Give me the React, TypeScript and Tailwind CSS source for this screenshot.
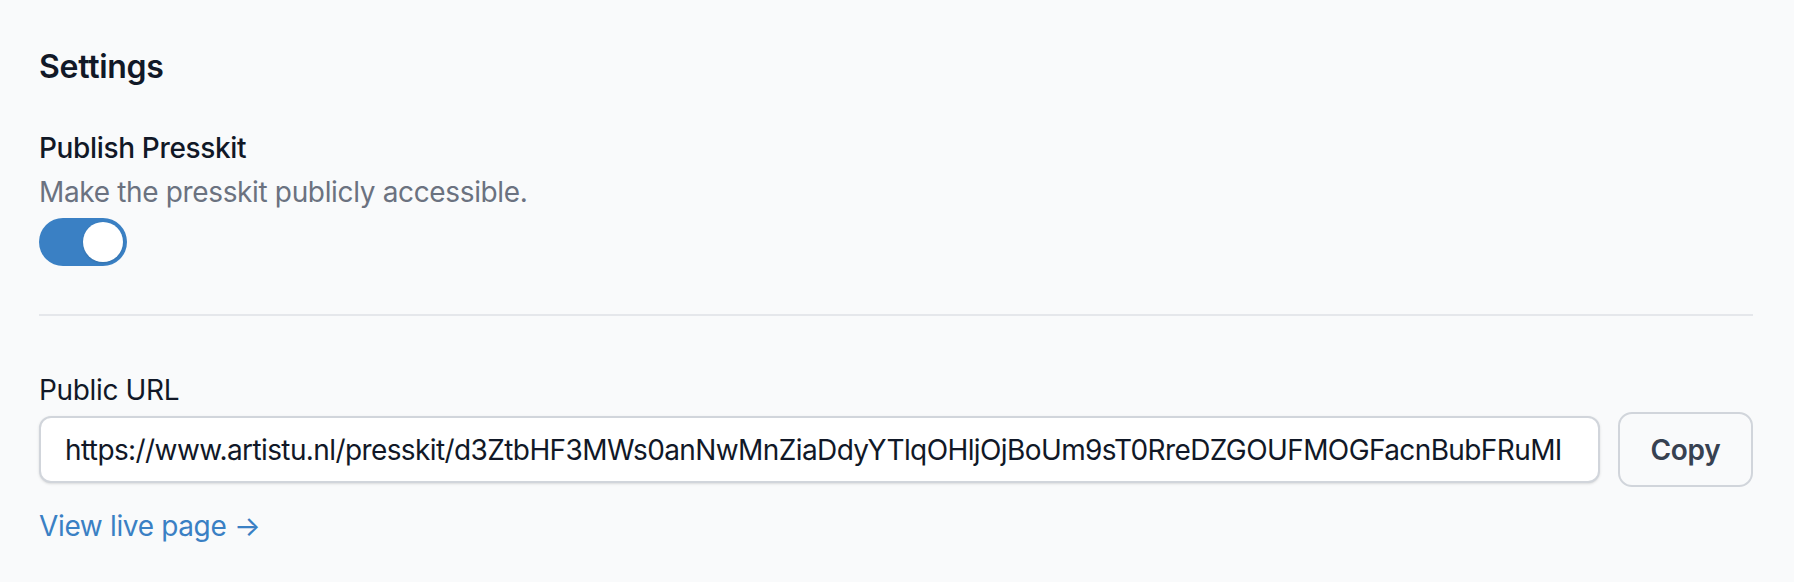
import { useState } from "react";

const publicUrl =
  "https://www.artistu.nl/presskit/d3ZtbHF3MWs0anNwMnZiaDdyYTlqOHljOjBoUm9sT0RreDZGOUFMOGFacnBubFRuMI";

export default function App() {
  const [published, setPublished] = useState(true);

  return (
    <div className="min-h-screen bg-[#f9fafb] font-['Inter','Noto_Sans',sans-serif] text-[#111827]">
      <div className="pl-[39px] pr-[41px] pt-[39px]">
        {/* Settings */}
        <h2 className="text-[32px] font-semibold leading-[56px] tracking-[-0.3px] text-[#111827]">Settings</h2>

        <div className="mt-[33px]">
          <p className="text-[28px] font-medium leading-[40px] tracking-[-0.35px] text-[#111827]">
            Publish Presskit
          </p>
          <p className="mt-[4px] text-[28px] leading-[40px] tracking-[-0.35px] text-[#6b7280]">
            Make the presskit publicly accessible.
          </p>
          <button
            type="button"
            role="switch"
            aria-checked={published}
            onClick={() => setPublished(!published)}
            className={`mt-[6px] flex h-[48px] w-[88px] items-center rounded-full border-[4px] border-transparent transition ${
              published ? "bg-[#3a80c4]" : "bg-[#e5e7eb]"
            }`}
          >
            <span
              className={`h-[40px] w-[40px] rounded-full bg-white shadow transition ${
                published ? "translate-x-[40px]" : "translate-x-0"
              }`}
            />
          </button>
        </div>

        <div className="mt-[48px] h-[2px] bg-[#e5e7eb]" />

        {/* Public URL */}
        <div className="mt-[54px]">
          <label className="block text-[28px] leading-[40px] tracking-[-0.35px] text-[#111827]">Public URL</label>
          <div className="mt-[2px] flex items-center gap-[18px]">
            <input
              readOnly
              value={publicUrl}
              className="h-[67px] min-w-0 flex-1 rounded-[12px] border-2 border-[#d1d5db] bg-white pl-[24px] pr-[20px] text-[28px] tracking-[-0.6px] text-[#111827] shadow-sm outline-none"
            />
            <button
              type="button"
              className="h-[75px] w-[135px] shrink-0 rounded-[14px] border-2 border-[#d1d5db] bg-[#f9fafb] text-[28px] font-semibold tracking-[-0.3px] text-[#374151]"
            >
              Copy
            </button>
          </div>
          <a
            href="#"
            className="mt-[19px] inline-block text-[28px] leading-[40px] tracking-[-0.35px] text-[#3a80c4]"
          >
            View live page →
          </a>
        </div>
      </div>
    </div>
  );
}
